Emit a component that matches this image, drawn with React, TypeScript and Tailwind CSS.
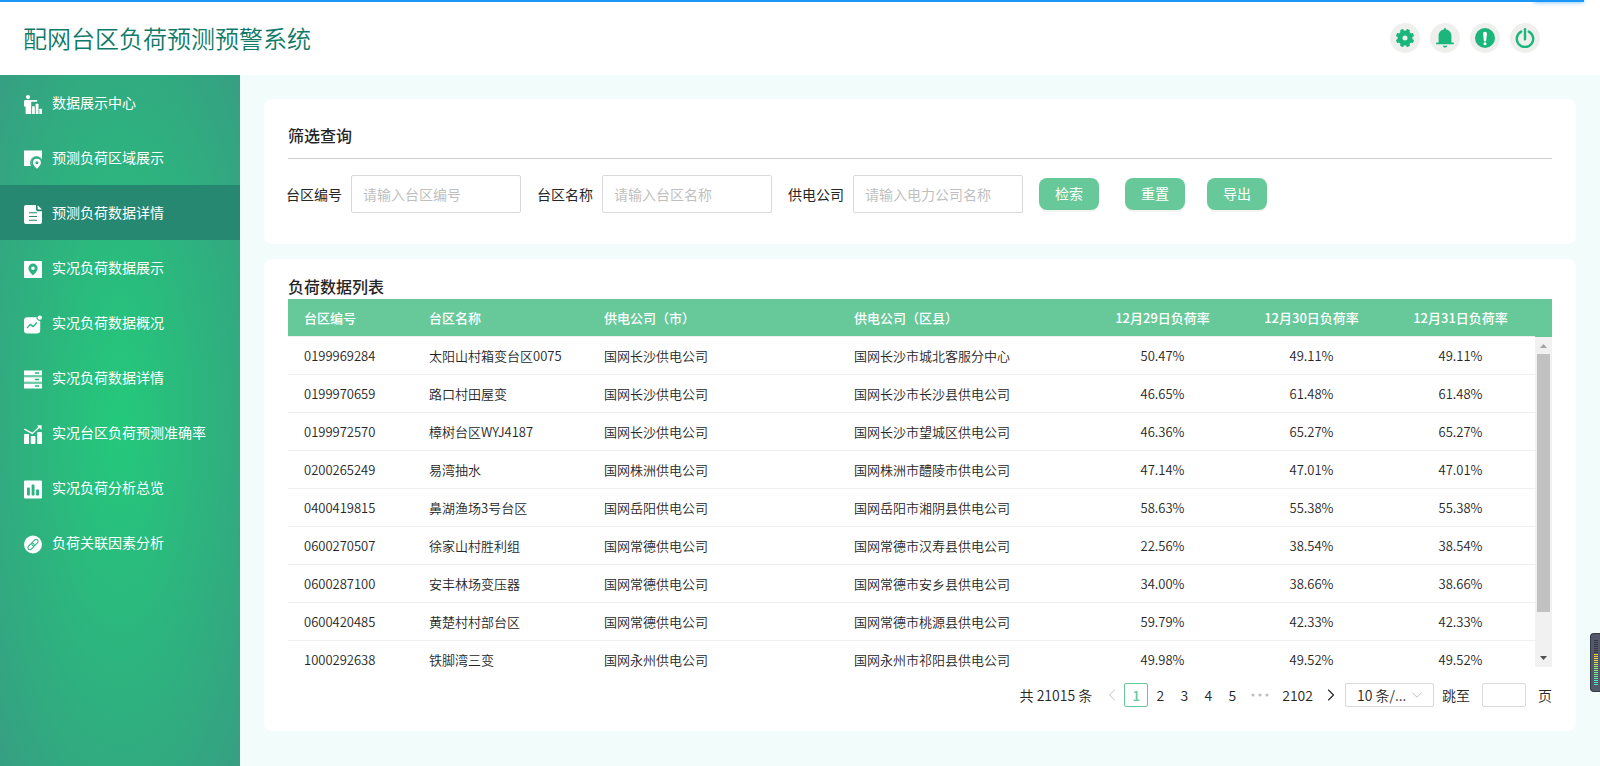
import { ChevronDown, ChevronLeft, ChevronRight } from "lucide-react";
import type { ReactNode } from "react";

const CUT = "#2bb480";

function MenuIcon({ children }: { children: ReactNode }) {
  return (
    <svg viewBox="0 0 18 19" className="mt-1.5 h-[19px] w-[18px] shrink-0" fill="#fff" aria-hidden="true">
      {children}
    </svg>
  );
}

const menu: { label: string; icon: ReactNode }[] = [
  {
    label: "数据展示中心",
    icon: (
      <>
        <circle cx="4" cy="2.1" r="2.1" />
        <path d="M1.4 4.9H12.4a.9.9 0 0 1 0 1.9H7.2V19H1.6V11.6H0V6.3C0 5.5.6 4.9 1.4 4.9z" />
        <rect x="8.1" y="11.2" width="2.7" height="7.8" rx=".5" />
        <rect x="11.7" y="8.8" width="2.8" height="10.2" rx=".5" />
        <rect x="15.3" y="13.8" width="2.7" height="5.2" rx=".5" />
      </>
    ),
  },
  {
    label: "预测负荷区域展示",
    icon: (
      <>
        <path d="M0 .5H18V9.2A6.200 6.200 0 0 0 7 16H0z" />
        <path d="M7.4 14.6A5.7 5.7 0 0 1 18 9.6" fill="none" stroke="#fff" strokeOpacity=".3" strokeWidth="1" />
        <path
          fillRule="evenodd"
          d="M12.900 8.700a4 4 0 0 0-4 4c0 2.600 4 6 4 6s4-3.400 4-6a4 4 0 0 0-4-4zm0 2.500a1.500 1.500 0 1 1 0 3 1.500 1.500 0 0 1 0-3z"
        />
      </>
    ),
  },
  {
    label: "预测负荷数据详情",
    icon: (
      <>
        <path d="M2 0H12V4.6A1.6 1.6 0 0 0 13.6 6.2H18V17a2 2 0 0 1-2 2H2a2 2 0 0 1-2-2V2A2 2 0 0 1 2 0z" />
        <path d="M13.6 0.2 18 4.6H14.4a.8.8 0 0 1-.8-.8z" />
        <path d="M5 7.7h8M5 11.5h8M5 15.2h8" stroke="#268871" strokeWidth="1.1" />
      </>
    ),
  },
  {
    label: "实况负荷数据展示",
    icon: (
      <>
        <rect y="1" width="18" height="17" rx=".8" />
        <path
          fill={CUT}
          fillRule="evenodd"
          d="M9 3.6a4.6 4.6 0 0 0-4.6 4.6C4.4 11.3 9 15.4 9 15.4s4.6-4.1 4.6-7.2A4.6 4.6 0 0 0 9 3.6zm0 2.8a1.8 1.8 0 1 1 0 3.6 1.8 1.8 0 0 1 0-3.6z"
        />
      </>
    ),
  },
  {
    label: "实况负荷数据概况",
    icon: (
      <>
        <path d="M3.4 2.2H12.6A3.4 3.4 0 0 0 16.2 6V15.2a3.3 3.3 0 0 1-3.3 3.3H3.3A3.3 3.3 0 0 1 0 15.2V5.6A3.4 3.4 0 0 1 3.4 2.2z" />
        <circle cx="15.8" cy="2.6" r="2.2" />
        <path d="M3.4 12.6 6.3 9.4 9.2 11.6 12.4 8" fill="none" stroke={CUT} strokeWidth="1.4" strokeLinecap="round" strokeLinejoin="round" />
      </>
    ),
  },
  {
    label: "实况负荷数据详情",
    icon: (
      <>
        <path d="M0 .5h18v4.7H0zM0 7.3h18v4.4H0zM0 13.8h18v4.7H0z" />
        <path d="M0 6.2h18M0 12.8h18" stroke="#fff" strokeOpacity=".5" strokeWidth=".9" />
        <path d="M11.4 3h3.2M11.4 9.5h3.2M11.4 16h3.2" stroke={CUT} strokeWidth="1.3" strokeLinecap="round" />
      </>
    ),
  },
  {
    label: "实况台区负荷预测准确率",
    icon: (
      <>
        <rect y="9" width="5" height="10" rx=".8" />
        <rect x="6.8" y="11" width="4.6" height="8" rx=".8" />
        <rect x="13.2" y="7" width="4.8" height="12" rx=".8" />
        <path d="M.3 4.2 8.3 8.4 16 1.6" fill="none" stroke="#fff" strokeWidth="1.3" />
        <path d="M13 .3H17.6V4.9L16 3.4 14.5 1.8z" />
      </>
    ),
  },
  {
    label: "实况负荷分析总览",
    icon: (
      <>
        <rect y=".5" width="18" height="18" rx="1" />
        <g fill={CUT}>
          <rect x="3" y="7.6" width="2.9" height="7.8" rx=".6" />
          <rect x="7.6" y="4.4" width="2.9" height="11" rx=".6" />
          <rect x="12.1" y="9.6" width="2.9" height="5.8" rx=".6" />
        </g>
      </>
    ),
  },
  {
    label: "负荷关联因素分析",
    icon: (
      <>
        <circle cx="9" cy="9.5" r="9" />
        <g transform="rotate(-45 9 9.5)" fill="none" stroke={CUT} strokeWidth="1">
          <rect x="2.600" y="7.500" width="7.400" height="4" rx="2" />
          <rect x="8" y="7.500" width="7.400" height="4" rx="2" />
        </g>
      </>
    ),
  },
];

const GREEN = "#1bb67c";

const actions: { label: string; icon: ReactNode }[] = [
  {
    label: "设置",
    icon: (
      <>
        <circle cx="10" cy="10" r="5" fill="none" stroke={GREEN} strokeWidth="5" />
        <g fill={GREEN}>
          {[22.5, 67.5, 112.5, 157.5, 202.5, 247.5, 292.5, 337.5].map((angle) => (
            <rect key={angle} x="8.2" y="0.8" width="3.6" height="4" rx=".8" transform={`rotate(${angle} 10 10)`} />
          ))}
        </g>
      </>
    ),
  },
  {
    label: "消息",
    icon: (
      <path
        fill={GREEN}
        d="M10 0a1.2 1.2 0 0 1 1.1 1.5C14.5 2 16.4 4.800 16.400 8V14.600H18.800V16.200H1.200V14.600H3.600V8C3.600 4.800 5.500 2 8.900 1.500A1.200 1.200 0 0 1 10 0zM7.700 17.800H12.300C12 19 11.200 19.600 10 19.600S8 19 7.700 17.800z"
      />
    ),
  },
  {
    label: "提示",
    icon: (
      <>
        <circle cx="10" cy="10" r="10" fill={GREEN} />
        <path d="M10 3.800c1.400 0 2 .9 1.900 2.200l-.7 6.200c-.1 1-.5 1.300-1.200 1.300s-1.100-.3-1.200-1.300L8.100 6C8 4.700 8.600 3.800 10 3.800z" fill="#fff" />
        <circle cx="10" cy="15.800" r="1.500" fill="#fff" />
      </>
    ),
  },
  {
    label: "退出",
    icon: (
      <g fill="none" stroke={GREEN} strokeWidth="2.400" strokeLinecap="round">
        <path d="M6.200 3.600A8.200 8.200 0 1 0 13.800 3.600" />
        <path d="M10 1.200V11.200" />
      </g>
    ),
  },
];

const fields = [
  { id: "area-code", label: "台区编号", placeholder: "请输入台区编号" },
  { id: "area-name", label: "台区名称", placeholder: "请输入台区名称" },
  { id: "company", label: "供电公司", placeholder: "请输入电力公司名称" },
];

const columns = ["台区编号", "台区名称", "供电公司（市）", "供电公司（区县）", "12月29日负荷率", "12月30日负荷率", "12月31日负荷率"];

const rows = [
  ["0199969284", "太阳山村箱变台区0075", "国网长沙供电公司", "国网长沙市城北客服分中心", "50.47%", "49.11%", "49.11%"],
  ["0199970659", "路口村田屋变", "国网长沙供电公司", "国网长沙市长沙县供电公司", "46.65%", "61.48%", "61.48%"],
  ["0199972570", "樟树台区WYJ4187", "国网长沙供电公司", "国网长沙市望城区供电公司", "46.36%", "65.27%", "65.27%"],
  ["0200265249", "易湾抽水", "国网株洲供电公司", "国网株洲市醴陵市供电公司", "47.14%", "47.01%", "47.01%"],
  ["0400419815", "鼻湖渔场3号台区", "国网岳阳供电公司", "国网岳阳市湘阴县供电公司", "58.63%", "55.38%", "55.38%"],
  ["0600270507", "徐家山村胜利组", "国网常德供电公司", "国网常德市汉寿县供电公司", "22.56%", "38.54%", "38.54%"],
  ["0600287100", "安丰林场变压器", "国网常德供电公司", "国网常德市安乡县供电公司", "34.00%", "38.66%", "38.66%"],
  ["0600420485", "黄楚村村部台区", "国网常德供电公司", "国网常德市桃源县供电公司", "59.79%", "42.33%", "42.33%"],
  ["1000292638", "铁脚湾三变", "国网永州供电公司", "国网永州市祁阳县供电公司", "49.98%", "49.52%", "49.52%"],
];

const meter = [
  "#343844", "#343844", "#343844", "#343844", "#343844", "#343844", "#343844",
  "#f5c842", "#f5d142", "#eedb46", "#e2e04c", "#d2e354", "#c2e65c", "#b0e866", "#9eea72",
  "#8eec7e", "#80ed8b", "#74ed98", "#6aeca6", "#60eab2", "#58e8bd", "#50e6c6", "#48e4ce",
];

const primaryButton =
  "h-8 w-[60px] rounded-lg bg-[#67c99a] pb-0.5 text-sm text-white shadow-[0_2px_0_rgba(0,0,0,0.045)] hover:bg-[#57bd8c]";
const pageButton = "h-6 min-w-6 rounded-xs px-1.5";

function FilterCard() {
  return (
    <section className="rounded-lg bg-white px-6 pt-6 pb-[31px]">
      <h2 className="border-b border-[#d5cccc] pb-[11px] text-base leading-6 font-medium">筛选查询</h2>
      <form className="-mx-0.5 mt-4 flex items-center gap-4 text-sm">
        {fields.map((field) => (
          <div key={field.id} className="flex items-center gap-[9px]">
            <label htmlFor={field.id} className="whitespace-nowrap">
              {field.label}
            </label>
            <input
              id={field.id}
              type="text"
              placeholder={field.placeholder}
              className="h-[38px] w-[170px] rounded-xs border border-[#d9d9d9] px-[11px] placeholder:text-[#bfbfbf]"
            />
          </div>
        ))}
        <div className="flex items-center gap-[22px]">
          <button type="button" className={`${primaryButton} mr-1`}>检索</button>
          <button type="button" className={primaryButton}>重置</button>
          <button type="button" className={primaryButton}>导出</button>
        </div>
      </form>
    </section>
  );
}

function ScrollTrack() {
  return (
    <div className="flex w-[17px] shrink-0 flex-col bg-[#67c99a] pt-[38px]" aria-hidden="true">
      <div className="flex flex-1 flex-col items-center bg-[#f1f1f1]">
        <svg viewBox="0 0 17 17" className="size-[17px]" fill="#a3a3a3">
          <path d="M5 11h7L8.500 7z" />
        </svg>
        <div className="flex w-[13px] flex-1 flex-col">
          <div className="h-[87%] bg-[#c1c1c1]" />
        </div>
        <svg viewBox="0 0 17 17" className="size-[17px]" fill="#505050">
          <path d="M5 6h7L8.500 10z" />
        </svg>
      </div>
    </div>
  );
}

function LoadTable() {
  return (
    <div className="flex h-[368px]">
      <div className="flex-1 overflow-y-auto [scrollbar-width:none]">
        <table className="w-full table-fixed border-separate border-spacing-0 text-[13px] leading-5">
          <colgroup>
            <col className="w-[125px]" />
            <col className="w-[175px]" />
            <col className="w-[250px]" />
            <col className="w-[250px]" />
            <col />
            <col />
            <col />
          </colgroup>
          <thead>
            <tr>
              {columns.map((name, i) => (
                <th
                  key={name}
                  scope="col"
                  className={`sticky top-0 h-[38px] border-b border-[#f0f0f0] bg-[#67c99a] px-4 font-medium text-white ${i > 3 ? "text-center" : "text-left"}`}
                >
                  {name}
                </th>
              ))}
            </tr>
          </thead>
          <tbody className="font-[350]">
            {rows.map((row) => (
              <tr key={row[0]}>
                {row.map((cell, i) => (
                  <td
                    key={i}
                    className={`h-[38px] border-b border-[#f0f0f0] px-4 whitespace-nowrap ${i > 3 ? "text-center" : "text-left"}`}
                  >
                    {cell}
                  </td>
                ))}
              </tr>
            ))}
          </tbody>
        </table>
      </div>
      <ScrollTrack />
    </div>
  );
}

function Pagination() {
  return (
    <nav aria-label="分页" className="mt-4 flex h-6 items-center justify-end text-sm font-[350]">
      <span className="mr-2">共 21015 条</span>
      <button type="button" aria-label="上一页" className="flex size-6 items-center justify-center text-[#bfbfbf]">
        <ChevronLeft size={20} strokeWidth={1.2} />
      </button>
      <button type="button" aria-current="page" className="h-6 w-6 rounded-xs border border-[#67c99a] font-medium text-[#67c99a]">
        1
      </button>
      <button type="button" className={pageButton}>2</button>
      <button type="button" className={pageButton}>3</button>
      <button type="button" className={pageButton}>4</button>
      <button type="button" className={pageButton}>5</button>
      <span className="flex w-8 justify-center">
        <svg viewBox="0 0 18 4" className="h-1 w-[18px]" fill="#bfbfbf" aria-hidden="true">
          <circle cx="2" cy="2" r="1.600" />
          <circle cx="9" cy="2" r="1.600" />
          <circle cx="16" cy="2" r="1.600" />
        </svg>
      </span>
      <button type="button" className={pageButton}>2102</button>
      <button type="button" aria-label="下一页" className="flex size-6 items-center justify-center">
        <ChevronRight size={20} strokeWidth={1.4} />
      </button>
      <div className="relative mr-2 ml-0.5">
        <select aria-label="每页条数" className="h-6 w-[89px] appearance-none rounded-xs border border-[#d9d9d9] bg-white pl-[11px]">
          <option>10 条/...</option>
        </select>
        <ChevronDown
          size={18}
          strokeWidth={1.3}
          className="pointer-events-none absolute top-[3px] right-2 text-[#bfbfbf]"
        />
      </div>
      <label htmlFor="jump">跳至</label>
      <input id="jump" type="text" className="mx-3 h-6 w-11 rounded-xs border border-[#d9d9d9] px-2" />
      <span>页</span>
    </nav>
  );
}

export default function App() {
  return (
    <div className="flex min-h-screen flex-col bg-[#f2fcfb] font-['Noto_Sans_CJK_SC','Noto_Sans',sans-serif] text-[#262626]">
      <div className="fixed top-0 right-4 left-0 z-10 h-0.5 bg-[#1b98f5]">
        <div className="ml-auto h-full w-[50px] shadow-[0_0_4px_#1b98f5]" />
      </div>
      <header className="flex h-[75px] shrink-0 items-center justify-between bg-white pr-[60px] pl-[23px]">
        <h1 className="text-2xl font-[350] text-[#0f7a68]">配网台区负荷预测预警系统</h1>
        <div className="flex gap-2.5">
          {actions.map((action) => (
            <button
              key={action.label}
              type="button"
              aria-label={action.label}
              className="flex size-[30px] items-center justify-center rounded-full bg-[#efefee]"
            >
              <svg viewBox="0 0 20 20" className="size-5" aria-hidden="true">
                {action.icon}
              </svg>
            </button>
          ))}
        </div>
      </header>
      <div className="flex flex-1">
        <aside className="w-60 shrink-0 bg-[radial-gradient(ellipse_at_center,#24c97b_0%,#369f82_100%)]">
          <nav className="flex flex-col text-sm text-white">
            {menu.map((item, i) => (
              <a
                key={item.label}
                href="#"
                aria-current={i === 2 ? "page" : undefined}
                className={`flex h-[55px] items-center gap-2.5 pb-0.5 pl-6 ${i === 2 ? "bg-[#268871]" : ""}`}
              >
                <MenuIcon>{item.icon}</MenuIcon>
                {item.label}
              </a>
            ))}
          </nav>
        </aside>
        <main className="flex min-w-0 flex-1 flex-col gap-[15px] p-6">
          <FilterCard />
          <section className="rounded-lg bg-white px-6 pt-[15px] pb-6">
            <h2 className="pb-px text-base leading-6 font-medium">负荷数据列表</h2>
            <LoadTable />
            <Pagination />
          </section>
        </main>
      </div>
      <div className="fixed right-0 bottom-[74px] h-[59px] w-2.5 rounded-l border border-r-0 border-[#343844] bg-[#535969]">
        <svg viewBox="0 0 4 46" className="mt-1.5 ml-[3px] h-[46px] w-1" shapeRendering="crispEdges" aria-hidden="true">
          {meter.map((color, i) => (
            <rect key={i} y={i * 2} width="4" height="1" fill={color} />
          ))}
        </svg>
      </div>
    </div>
  );
}
